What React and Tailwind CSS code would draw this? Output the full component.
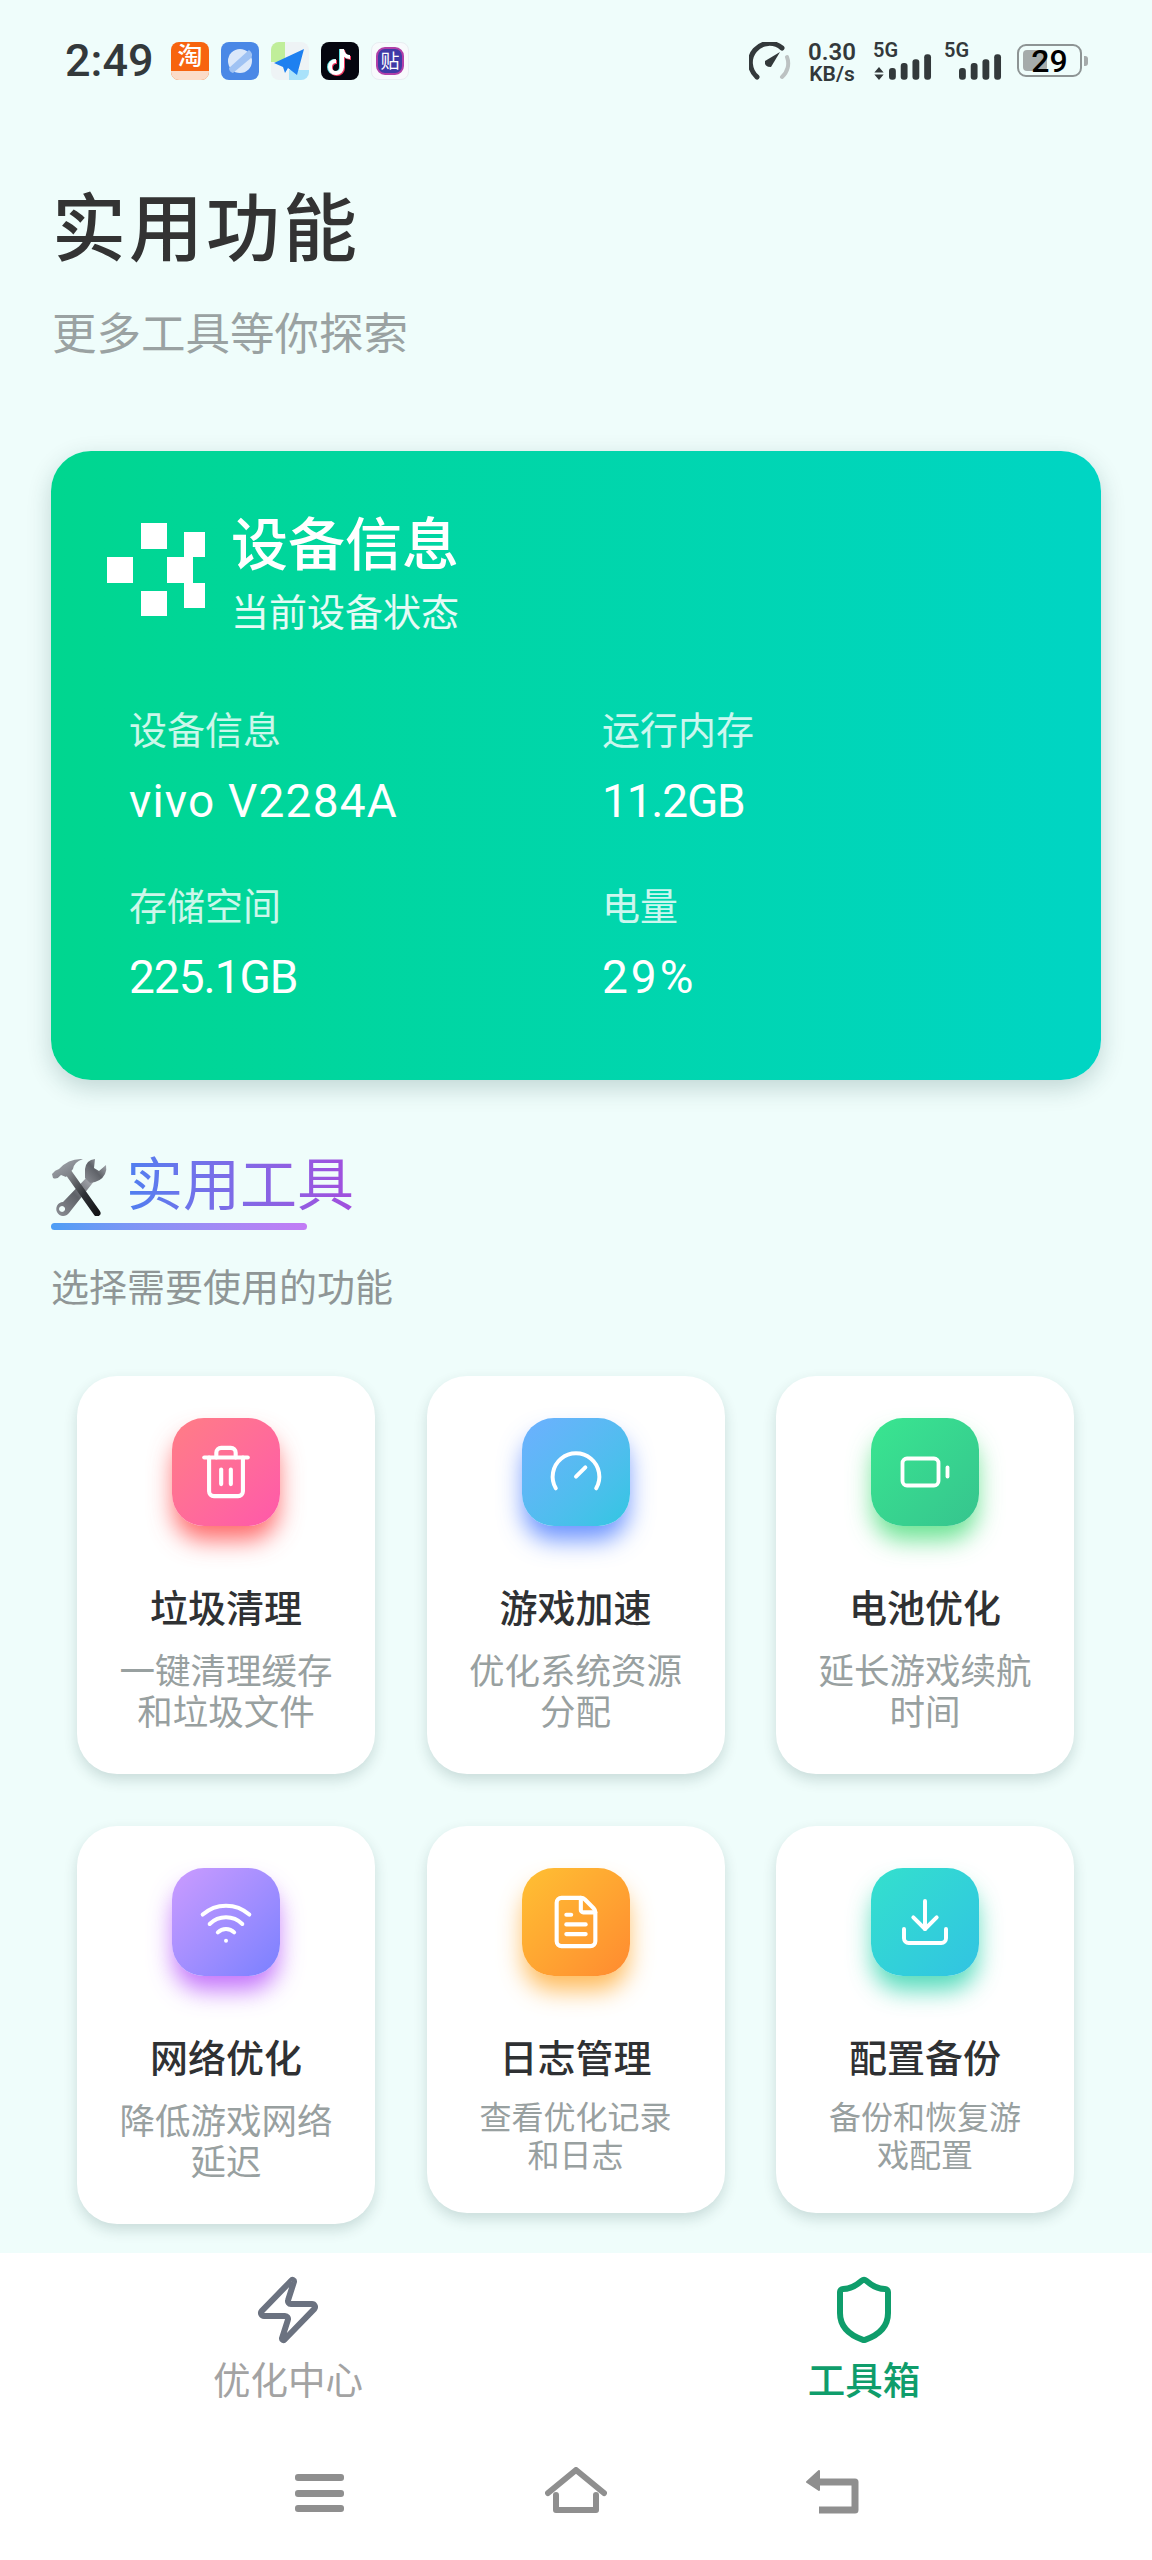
import React from 'react';
import { Trash2, Gauge, Battery, Wifi, FileText, Download, Zap, Shield } from 'lucide-react';

const font = { fontFamily: '"Roboto", "Noto Sans CJK SC", sans-serif' };

function SignalBars({ className }) {
  return (
    <svg viewBox="0 0 44 26" className={className}>
      <rect x="0" y="14" width="7" height="12" rx="3" fill="#33393b" />
      <rect x="12" y="9" width="7" height="17" rx="3" fill="#33393b" />
      <rect x="24" y="5" width="7" height="21" rx="3" fill="#33393b" />
      <rect x="36" y="0" width="7" height="26" rx="3" fill="#33393b" />
    </svg>
  );
}

function StatusBar() {
  return (
    <div className="h-[120px] shrink-0 flex items-start justify-between pl-[65px] pr-[64px] pt-[42px]">
      <div className="flex items-center">
        <span className="w-[87px] text-[45px] leading-[38px] font-medium whitespace-nowrap text-[#33393b]">2:49</span>
        <div className="ml-[19px] flex gap-[12px]">
          <div className="w-[38px] h-[38px] rounded-[8px] overflow-hidden bg-[#f7640f] flex flex-col items-center">
            <span className="h-[29px] text-[25px] leading-[29px] text-white font-medium">淘</span>
            <div className="w-full h-[9px] bg-[#fbdcc8]" />
          </div>
          <div className="w-[38px] h-[38px] rounded-[8px] bg-[#4a88e6] flex items-center justify-center">
            <svg viewBox="0 0 38 38" className="w-[38px] h-[38px]">
              <circle cx="19" cy="19" r="12" fill="#dbe8fa" />
              <path d="M8 26 L28 8 Q33 12 30 16 L12 31 Q8 30 8 26Z" fill="#9fc2f3" />
            </svg>
          </div>
          <div className="w-[38px] h-[38px] rounded-[8px] overflow-hidden bg-[#eef3f5]">
            <svg viewBox="0 0 38 38" className="w-[38px] h-[38px]">
              <rect x="0" y="0" width="14" height="20" fill="#c0ee9a" />
              <rect x="18" y="28" width="20" height="10" fill="#a9e2fa" />
              <path d="M3 21 L33 7 L26 33 L17 26 L14 31 L12 25Z" fill="#1e80f0" />
            </svg>
          </div>
          <div className="w-[38px] h-[38px] rounded-[8px] bg-[#05060f] flex items-center justify-center">
            <svg viewBox="0 0 38 38" className="w-[38px] h-[38px]" fill="none" strokeWidth="4">
              <path d="M21 7v18a6 6 0 1 1-6-6" stroke="#5fe5e5" transform="translate(-1 0)" />
              <path d="M21 7c0 5 4 8 8 8" stroke="#5fe5e5" transform="translate(-1 0)" />
              <path d="M21 7v18a6 6 0 1 1-6-6" stroke="#f0385f" transform="translate(1 1)" />
              <path d="M21 7c0 5 4 8 8 8" stroke="#f0385f" transform="translate(1 1)" />
              <path d="M21 7v18a6 6 0 1 1-6-6" stroke="#ffffff" />
              <path d="M21 7c0 5 4 8 8 8" stroke="#ffffff" />
            </svg>
          </div>
          <div className="w-[38px] h-[38px] rounded-[8px] bg-[#f8fafc] border border-[#e9eef2] flex items-center justify-center">
            <div className="w-[28px] h-[28px] rounded-[9px] bg-[#3f3aa6] border-2 border-[#b13fa8] flex items-center justify-center text-white text-[19px] leading-none">贴</div>
          </div>
        </div>
      </div>
      <div className="flex items-start">
        <svg viewBox="0 0 42 38" className="w-[42px] h-[38px]" fill="none">
          <path d="M8 35 A18 18 0 0 1 33 6" stroke="#33393b" strokeWidth="5" strokeLinecap="round" />
          <path d="M33 35 A18 18 0 0 0 38 15" stroke="#bcc2c2" strokeWidth="4" strokeLinecap="round" />
          <path d="M16 19 L31 10 L22 25 Q15 25 16 19Z" fill="#33393b" />
        </svg>
        <div className="ml-[16px] w-[50px] flex flex-col items-center text-[#33393b] font-semibold">
          <span className="text-[24px] leading-[20px]">0.30</span>
          <span className="text-[21px] leading-[20px] mt-[2px]">KB/s</span>
        </div>
        <div className="relative ml-[16px] w-[60px] h-[38px]">
          <span className="absolute left-0 top-[-2px] text-[20px] leading-[20px] font-semibold text-[#33393b]">5G</span>
          <svg viewBox="0 0 10 14" className="absolute left-[1px] top-[25px] w-[10px] h-[13px]">
            <path d="M5 0 L10 6 H0Z M5 14 L10 8 H0Z" fill="#33393b" />
          </svg>
          <SignalBars className="absolute left-[16px] top-[12px] w-[43px] h-[26px]" />
        </div>
        <div className="relative ml-[11px] w-[60px] h-[38px]">
          <span className="absolute left-0 top-[-2px] text-[20px] leading-[20px] font-semibold text-[#33393b]">5G</span>
          <SignalBars className="absolute left-[15px] top-[12px] w-[43px] h-[26px]" />
        </div>
        <div className="ml-[13px] mt-[2px] flex items-center">
          <div className="relative w-[65px] h-[33px] rounded-[9px] border-[2px] border-[#8d9494] p-[4px]">
            <div className="w-[24px] h-full rounded-[4px] bg-[#a5abab]" />
            <span className="absolute inset-0 flex items-center justify-center text-[32px] leading-none font-medium text-black">29</span>
          </div>
          <div className="ml-[2px] w-[4px] h-[10px] rounded-r-[3px] bg-[#a5abab]" />
        </div>
      </div>
    </div>
  );
}

function DeviceStat({ label, value, tracking }) {
  return (
    <div>
      <div className="text-[38px] leading-[50px] text-white/80">{label}</div>
      <div className={`mt-[20px] text-[46px] leading-[50px] text-white ${tracking}`}>{value}</div>
    </div>
  );
}

function DeviceCard() {
  return (
    <div className="mx-[51px] h-[629px] rounded-[40px] bg-gradient-to-r from-[#00d68f] to-[#00d5c4] shadow-[0_8px_24px_rgba(0,60,60,0.2)] pt-[64px] pl-[78px]">
      <div className="flex items-start">
        <svg viewBox="0 0 98 93" className="w-[98px] h-[93px] mt-[8px] -ml-[22px]" fill="#ffffff">
          <rect x="0" y="34" width="26" height="26" />
          <rect x="34" y="0" width="26" height="26" />
          <rect x="77" y="9" width="21" height="25" />
          <rect x="60" y="34" width="26" height="26" />
          <rect x="77" y="60" width="21" height="25" />
          <rect x="34" y="68" width="26" height="26" />
        </svg>
        <div className="ml-[26px]">
          <div className="text-[57px] leading-[62px] font-medium text-white">设备信息</div>
          <div className="mt-[11px] text-[38px] leading-[50px] text-white/90">当前设备状态</div>
        </div>
      </div>
      <div className="mt-[68px] grid grid-cols-[473px_1fr] gap-y-[56px]">
        <DeviceStat label="设备信息" value="vivo V2284A" tracking="tracking-[1.2px]" />
        <DeviceStat label="运行内存" value="11.2GB" tracking="tracking-[-1.2px]" />
        <DeviceStat label="存储空间" value="225.1GB" tracking="tracking-[-1px]" />
        <DeviceStat label="电量" value="29%" tracking="tracking-[3px]" />
      </div>
    </div>
  );
}

function ToolsIcon() {
  // hammer and wrench emoji
  return (
    <svg viewBox="12 12 56 60" className="w-[56px] h-[60px]">
      <defs>
        <linearGradient id="wrenchFill" x1="0" y1="1" x2="1" y2="0">
          <stop offset="0" stopColor="#8d9096" />
          <stop offset="0.5" stopColor="#5f6268" />
          <stop offset="1" stopColor="#b9bcc2" />
        </linearGradient>
        <linearGradient id="hammerHandle" x1="0" y1="0" x2="1" y2="1">
          <stop offset="0" stopColor="#8a8d92" />
          <stop offset="0.55" stopColor="#2f3236" />
          <stop offset="1" stopColor="#141517" />
        </linearGradient>
        <linearGradient id="hammerHead" x1="0" y1="0" x2="1" y2="1">
          <stop offset="0" stopColor="#a9adb3" />
          <stop offset="1" stopColor="#6c7076" />
        </linearGradient>
      </defs>
      <path d="M24 58 L50 31 L56 36 L30 69 A7 7 0 1 1 24 58Z M23 62 a3 3 0 1 0 .1 0Z" fill="url(#wrenchFill)" fillRule="evenodd" />
      <path d="M46 34 L51 39 Q62 38 66 30 Q68 26 67 21 L60 27 L55 24 L56 15 Q47 16 46 25Z" fill="url(#wrenchFill)" />
      <path d="M29 28 L58 69" stroke="url(#hammerHandle)" strokeWidth="7" strokeLinecap="round" />
      <path d="M13 30 Q16 26 20 25 Q30 14 44 15 Q35 18 34 25 L27 33 L22 31 Q18 36 14 34Z" fill="url(#hammerHead)" />
    </svg>
  );
}

const tools = [
  { title: '垃圾清理', desc: ['一键清理缓存', '和垃圾文件'], Icon: Trash2, size: 58, box: 'from-[#ff7d85] to-[#ff58aa] shadow-[0_16px_24px_-2px_rgba(255,70,70,0.8)]' },
  { title: '游戏加速', desc: ['优化系统资源', '分配'], Icon: Gauge, size: 56, box: 'from-[#6cb0ff] to-[#30c6e2] shadow-[0_16px_24px_-2px_rgba(70,120,255,0.8)]' },
  { title: '电池优化', desc: ['延长游戏续航', '时间'], Icon: Battery, size: 54, box: 'from-[#39e690] to-[#36c48e] shadow-[0_16px_24px_-2px_rgba(70,220,120,0.8)]' },
  { title: '网络优化', desc: ['降低游戏网络', '延迟'], Icon: Wifi, size: 56, box: 'from-[#cb9bff] to-[#7a80ff] shadow-[0_16px_24px_-2px_rgba(180,80,250,0.8)]' },
  { title: '日志管理', desc: ['查看优化记录', '和日志'], Icon: FileText, size: 58, small: true, box: 'from-[#ffc033] to-[#ff8a30] shadow-[0_16px_24px_-2px_rgba(255,170,50,0.8)]' },
  { title: '配置备份', desc: ['备份和恢复游', '戏配置'], Icon: Download, size: 56, small: true, box: 'from-[#34e0cd] to-[#32c3e2] shadow-[0_16px_24px_-2px_rgba(40,210,170,0.8)]' },
];

function ToolCard({ title, desc, Icon, size, box, small }) {
  return (
    <div className="rounded-[40px] bg-white shadow-[0_6px_14px_rgba(0,50,50,0.16)] pt-[42px] pb-[38px] flex flex-col items-center">
      <div className={`w-[108px] h-[108px] rounded-[32px] bg-gradient-to-br ${box} flex items-center justify-center`}>
        <Icon size={size} color="#ffffff" strokeWidth={1.7} />
      </div>
      <div className="mt-[58px] text-[38px] leading-[50px] font-medium text-[#2f3133]">{title}</div>
      <div className={small ? 'mt-[15px] text-[32px] leading-[38px] text-[#98a0a0] text-center' : 'mt-[18px] mb-[2px] text-[35.5px] leading-[41px] text-[#98a0a0] text-center'}>
        {desc.map((line) => (
          <div key={line}>{line}</div>
        ))}
      </div>
    </div>
  );
}

function BottomNav() {
  return (
    <div className="shrink-0 bg-white">
      <div className="flex pt-[21px]">
        <div className="flex-1 flex flex-col items-center">
          <Zap size={72} color="#6b7280" strokeWidth={2} />
          <span className="mt-[10px] text-[37.5px] leading-[50px] text-[#a3a3a3]">优化中心</span>
        </div>
        <div className="flex-1 flex flex-col items-center">
          <Shield size={72} color="#0f9d6b" strokeWidth={2} />
          <span className="mt-[10px] text-[37.5px] leading-[50px] font-medium text-[#0f9d6b]">工具箱</span>
        </div>
      </div>
      <div className="h-[154px] relative">
        {/* system nav */}
        <div className="absolute left-[295px] top-[68px] w-[49px] h-[38px] flex flex-col justify-between">
          <div className="h-[7px] rounded-[3px] bg-[#8f8f8f]" />
          <div className="h-[7px] rounded-[3px] bg-[#8f8f8f]" />
          <div className="h-[7px] rounded-[3px] bg-[#8f8f8f]" />
        </div>
        <svg viewBox="0 0 62 46" className="absolute left-[545px] top-[61px] w-[62px] h-[46px]" fill="none" stroke="#8f8f8f" strokeWidth="6" strokeLinecap="round" strokeLinejoin="round">
          <path d="M3 26 L31 3 L59 26" />
          <path d="M11 28 V43 H51 V28" />
        </svg>
        <svg viewBox="0 0 54 46" className="absolute left-[805px] top-[62px] w-[54px] h-[46px]" fill="none" stroke="#8f8f8f" strokeWidth="7" strokeLinejoin="round">
          <path d="M12 14 H50 V42 H14" />
          <path d="M14 3 L2 14 L14 22Z" fill="#8f8f8f" strokeWidth="2" />
        </svg>
      </div>
    </div>
  );
}

export default function App() {
  return (
    <div className="w-[1152px] h-[2560px] flex flex-col overflow-hidden bg-[#effdfb]" style={font}>
      <StatusBar />
      <div className="flex-1 overflow-hidden">
        <div className="pl-[52px]">
          <h1 className="mt-[68px] text-[74px] leading-[84px] font-medium tracking-[3px] text-[#333333]">实用功能</h1>
          <p className="mt-[37px] text-[44.5px] leading-[52px] text-[#9aa2a2]">更多工具等你探索</p>
        </div>
        <div className="mt-[90px]">
          <DeviceCard />
        </div>
        <div className="mt-[74px] ml-[51px] w-[303px] relative">
          <div className="h-[64px] flex items-center gap-[19px]">
            <ToolsIcon />
            <span className="text-[57px] leading-[64px] bg-gradient-to-r from-[#4e7ff0] to-[#a14edd] bg-clip-text text-transparent">实用工具</span>
          </div>
          <div className="mt-[5px] w-[256px] h-[7px] rounded-full bg-gradient-to-r from-[#4c9ef5] to-[#c27cf5]" />
        </div>
        <p className="ml-[51px] mt-[33px] text-[38px] leading-[50px] text-[#8f9696]">选择需要使用的功能</p>
        <div className="mt-[63px] pl-[77px] grid grid-cols-[298px_298px_298px] gap-x-[51.5px] gap-y-[52px] items-start">
          {tools.map((t) => (
            <ToolCard key={t.title} {...t} />
          ))}
        </div>
      </div>
      <BottomNav />
    </div>
  );
}
